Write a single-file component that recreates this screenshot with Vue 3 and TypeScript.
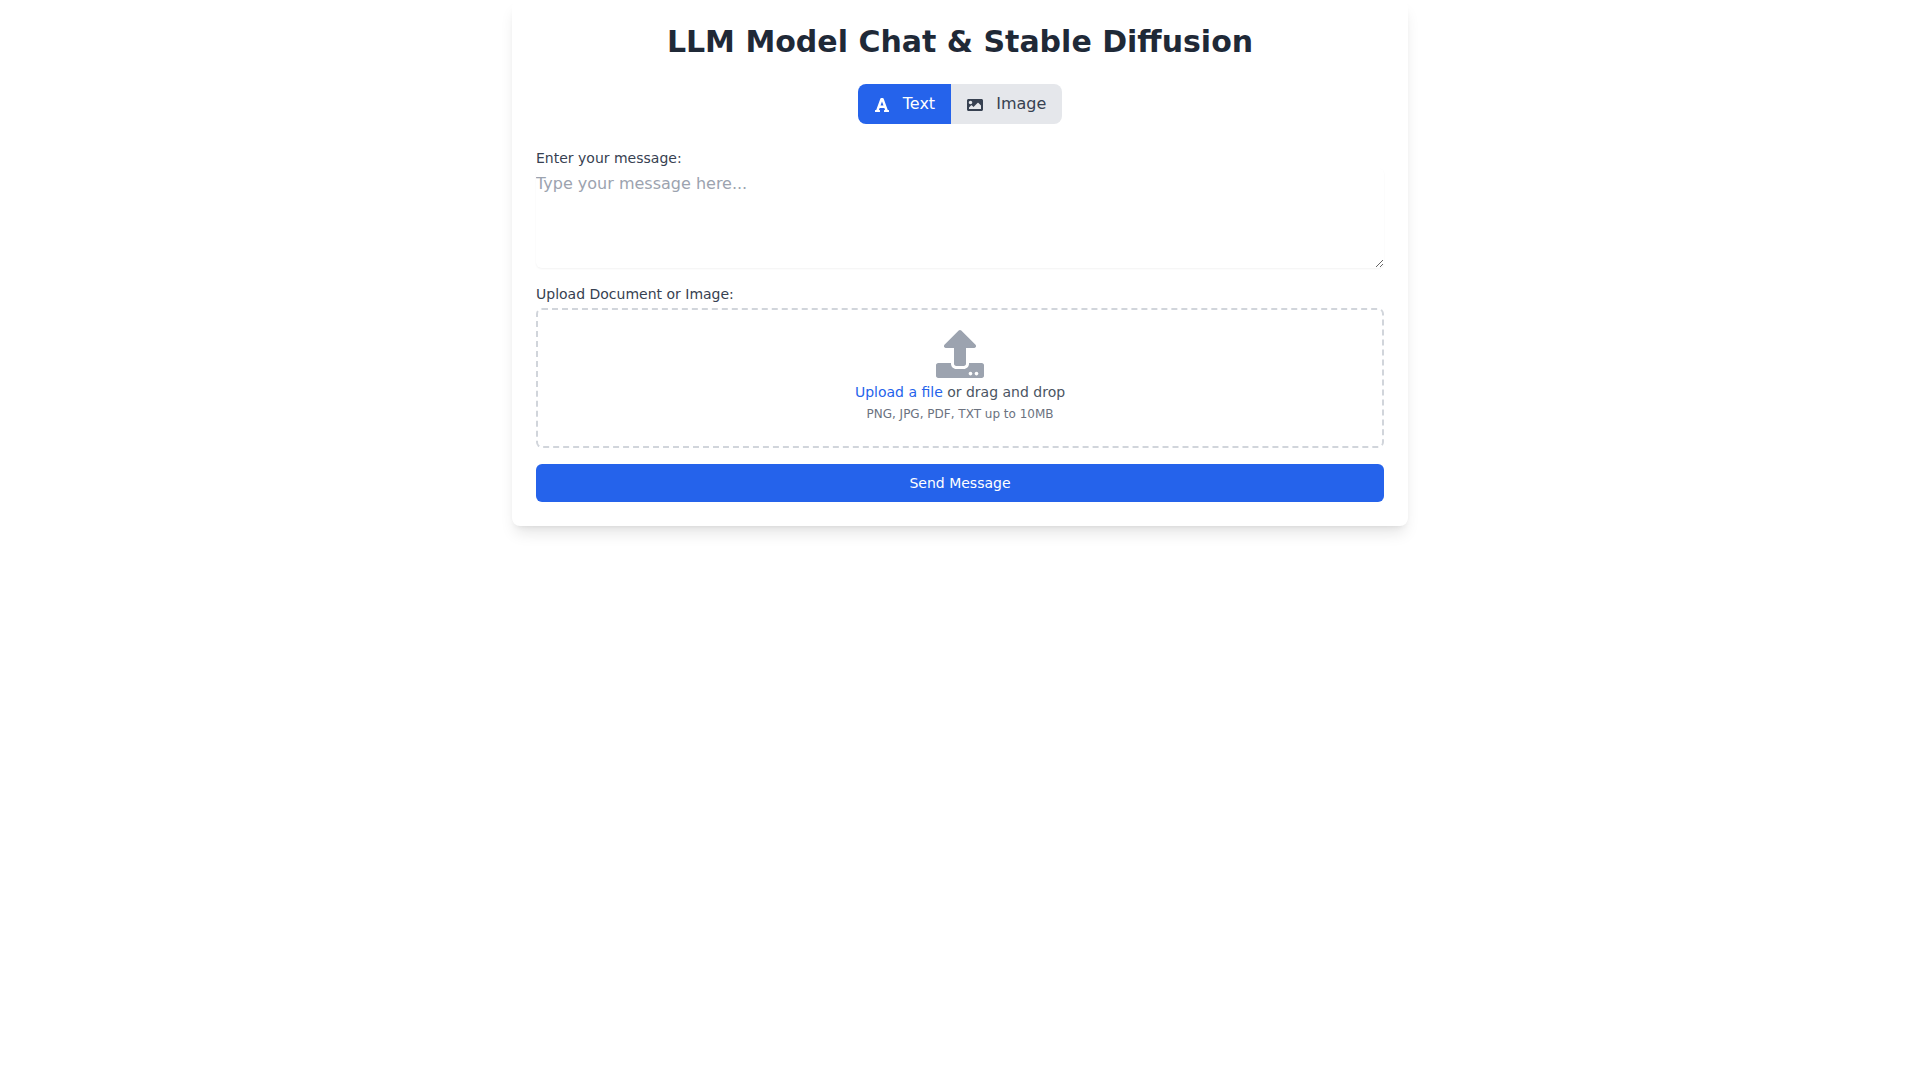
<script setup lang="ts">
import { ref } from 'vue'

type Mode = 'text' | 'image'

const mode = ref<Mode>('text')
const message = ref('')
</script>

<template>
  <div class="page">
    <div class="card">
      <h1 class="title">LLM Model Chat &amp; Stable Diffusion</h1>

      <div class="tabs">
        <button class="tab tab-left" :class="{ active: mode === 'text' }" @click="mode = 'text'">
          <svg class="tab-icon tab-icon-font" viewBox="0 0 448 512" fill="currentColor">
            <path d="M432 416h-23.41L277.88 53.69A32 32 0 0 0 247.58 32h-47.16a32 32 0 0 0-30.3 21.69L39.41 416H16a16 16 0 0 0-16 16v32a16 16 0 0 0 16 16h128a16 16 0 0 0 16-16v-32a16 16 0 0 0-16-16h-19.6l23.3-64h152.6l23.3 64H304a16 16 0 0 0-16 16v32a16 16 0 0 0 16 16h128a16 16 0 0 0 16-16v-32a16 16 0 0 0-16-16zM176.85 272L224 142.51 271.15 272z" />
          </svg>
          Text
        </button>
        <button class="tab tab-right" :class="{ active: mode === 'image' }" @click="mode = 'image'">
          <svg class="tab-icon tab-icon-image" viewBox="0 0 512 512" fill="currentColor">
            <path d="M464 448H48c-26.51 0-48-21.49-48-48V112c0-26.51 21.49-48 48-48h416c26.51 0 48 21.49 48 48v288c0 26.51-21.49 48-48 48zM112 120c-30.928 0-56 25.072-56 56s25.072 56 56 56 56-25.072 56-56-25.072-56-56-56zM64 384h384V272l-87.515-87.515c-4.686-4.686-12.284-4.686-16.971 0L208 320l-55.515-55.515c-4.686-4.686-12.284-4.686-16.971 0L64 336v48z" />
          </svg>
          Image
        </button>
      </div>

      <form class="form" @submit.prevent>
        <div class="field">
          <label class="label" for="message">Enter your message:</label>
          <textarea id="message" v-model="message" class="textarea" rows="4" placeholder="Type your message here..."></textarea>
        </div>

        <div class="field">
          <label class="label label-upload">Upload Document or Image:</label>
          <div class="dropzone">
            <svg class="upload-icon" viewBox="0 0 512 512" fill="currentColor">
              <path d="M296 384h-80c-13.3 0-24-10.7-24-24V192h-87.7c-17.8 0-26.7-21.5-14.1-34.1L242.3 5.7c7.5-7.5 19.8-7.5 27.3 0l152.2 152.2c12.6 12.6 3.7 34.1-14.1 34.1H320v168c0 13.3-10.7 24-24 24zm216-8v112c0 13.3-10.7 24-24 24H24c-13.3 0-24-10.7-24-24V376c0-13.3 10.7-24 24-24h136v8c0 30.9 25.1 56 56 56h80c30.9 0 56-25.1 56-56v-8h136c13.3 0 24 10.7 24 24zm-124 88c0-11-9-20-20-20s-20 9-20 20 9 20 20 20 20-9 20-20zm64 0c0-11-9-20-20-20s-20 9-20 20 9 20 20 20 20-9 20-20z" />
            </svg>
            <p class="drop-text"><span class="drop-link">Upload a file</span> or drag and drop</p>
            <p class="drop-hint">PNG, JPG, PDF, TXT up to 10MB</p>
          </div>
        </div>

        <button class="send" type="submit">Send Message</button>
      </form>
    </div>
  </div>
</template>

<style>
html,
body {
  margin: 0;
  background: #ffffff;
}
</style>

<style scoped>
.page {
  min-height: 1080px;
  font-family: 'DejaVu Sans', sans-serif;
  box-sizing: border-box;
}

.card {
  box-sizing: border-box;
  width: 896px;
  margin: 0 auto;
  padding: 24px;
  background: #ffffff;
  border-radius: 8px;
  box-shadow: 0 10px 15px -3px rgba(0, 0, 0, 0.1), 0 4px 6px -4px rgba(0, 0, 0, 0.1);
}

.title {
  margin: 0 0 24px;
  font-size: 30px;
  line-height: 36px;
  font-weight: 700;
  text-align: center;
  color: #1f2937;
}

.tabs {
  display: flex;
  justify-content: center;
  margin-bottom: 24px;
}

.tab {
  display: block;
  padding: 8px 16px;
  border: none;
  font-family: inherit;
  font-size: 16px;
  line-height: 24px;
  background: #e5e7eb;
  color: #374151;
  cursor: pointer;
}

.tab.active {
  background: #2563eb;
  color: #ffffff;
}

.tab-left {
  padding-left: 17px;
  border-radius: 8px 0 0 8px;
}

.tab-right {
  border-radius: 0 8px 8px 0;
}

.tab-icon {
  display: inline-block;
  height: 16px;
  vertical-align: -4px;
}

.tab-icon-font {
  width: 14px;
  margin-right: 9px;
}

.tab-icon-image {
  width: 16px;
  margin-right: 8px;
}

.form {
  display: flex;
  flex-direction: column;
  gap: 16px;
}

.field {
  display: flex;
  flex-direction: column;
}

.label {
  font-size: 14px;
  line-height: 20px;
  font-weight: 400;
  color: #374151;
}

.label-upload {
  margin-bottom: 4px;
}

.textarea {
  box-sizing: border-box;
  width: 100%;
  height: 100px;
  padding: 4px 0;
  border: none;
  border-radius: 6px;
  box-shadow: 0 1px 2px 0 rgba(0, 0, 0, 0.05);
  outline: none;
  font-family: inherit;
  font-size: 16px;
  line-height: 24px;
  color: #374151;
  resize: vertical;
}

.textarea::placeholder {
  color: #9ca3af;
}

.dropzone {
  display: flex;
  flex-direction: column;
  align-items: center;
  padding: 20px 24px 24px;
  border: 2px dashed #d1d5db;
  border-radius: 6px;
}

.upload-icon {
  display: block;
  width: 48px;
  height: 48px;
  color: #9ca3af;
}

.drop-text {
  margin: 4px 0 0;
  font-size: 14px;
  line-height: 20px;
  color: #4b5563;
}

.drop-link {
  color: #2563eb;
}

.drop-hint {
  margin: 4px 0 0;
  font-size: 12px;
  line-height: 16px;
  color: #6b7280;
}

.send {
  width: 100%;
  height: 38px;
  border: none;
  border-radius: 6px;
  background: #2563eb;
  color: #ffffff;
  font-family: inherit;
  font-size: 14px;
  line-height: 20px;
  cursor: pointer;
}
</style>
